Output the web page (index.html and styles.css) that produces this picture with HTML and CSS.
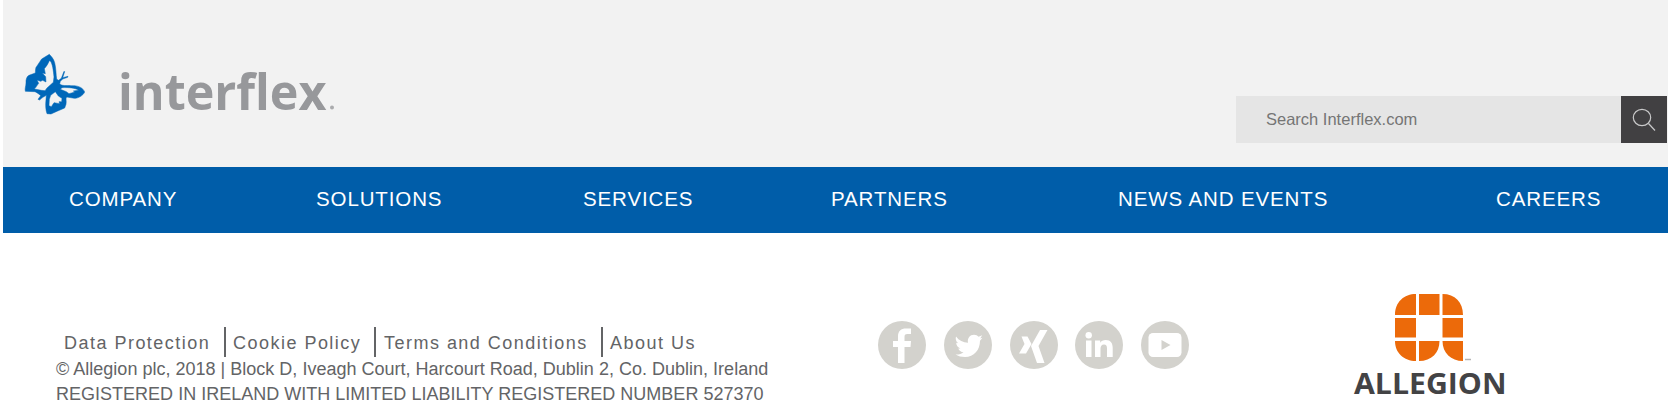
FILE: index.html
```html
<!DOCTYPE html>
<html lang="en">
<head>
<meta charset="utf-8">
<title>Interflex</title>
<link rel="stylesheet" href="styles.css">
</head>
<body>
<div class="page">
  <header class="header">
    <svg class="logo" viewBox="0 0 340 95" role="img" aria-label="interflex">
      <g transform="scale(.33333)">
        <path fill="#0067b9" stroke="#0067b9" stroke-width="1.5" fill-rule="evenodd" d="M103 28 C109 34 116 42 119 53 C123 68 123 88 125 103 L131 106 L139 100 L147 79 L149 80 L143 98 L159 94 L158 97 L143 102 L136 109 L134 117 C142 124 154 121 168 122 C190 121 204 128 209 141 C204 152 190 160 178 160 L155 156 C151 160 155 168 153 178 L149 189 L128 198 L108 207 L96 206 C92 195 91 180 93 164 L94 151 C88 154 79 160 74 165 L69 163 L77 152 C73 148 68 144 60 140 L31 139 C29 130 33 123 33 114 C32 103 36 94 42 91 L61 84 C62 77 60 69 66 63 L80 42 Z
        M103 47 C99 57 94 64 88 71 L91 86 L82 84 L92 95 L93 111 L83 106 L77 109 L66 105 L71 115 C66 121 63 128 58 132 L79 136 L90 137 L96 129 L115 112 L117 96 C115 77 113 57 106 48 Z
        M141 128 L136 133 L154 140 L162 146 L180 141 L175 138 L191 136 C182 129 163 127 141 128 Z
        M121 140 L107 151 L103 163 L102 182 L109 185 L117 173 L134 176 L132 170 L140 170 L141 160 L130 153 Z"/>
      </g>
      <text class="logo-word" x="103" y="65" textLength="208.500" lengthAdjust="spacingAndGlyphs">interflex</text>
      <circle cx="317" cy="62.500" r="2" fill="#aaabad"/>
    </svg>
    <form class="search">
      <input class="search-input" type="text" placeholder="Search Interflex.com" aria-label="Search">
      <button class="search-button" type="button" aria-label="Search">
        <svg width="24" height="24" viewBox="0 0 24 24" fill="none" stroke="#c9c9ca" stroke-width="1.2"><ellipse cx="10" cy="9.500" rx="8.700" ry="8.200"/><path d="M16.500 15.500l6.500 7"/></svg>
      </button>
    </form>
  </header>
  <nav class="nav">
    <a class="nav-link company">COMPANY</a>
    <a class="nav-link solutions">SOLUTIONS</a>
    <a class="nav-link services">SERVICES</a>
    <a class="nav-link partners">PARTNERS</a>
    <a class="nav-link news">NEWS AND EVENTS</a>
    <a class="nav-link careers">CAREERS</a>
  </nav>
  <footer class="footer">
    <div class="legal">
      <div class="links">
        <a class="link data">Data Protection</a>
        <a class="link cookie">Cookie Policy</a>
        <a class="link terms">Terms and Conditions</a>
        <a class="link about">About Us</a>
      </div>
      <p class="line address">© Allegion plc, 2018 | Block D, Iveagh Court, Harcourt Road, Dublin 2, Co. Dublin, Ireland</p>
      <p class="line registered">REGISTERED IN IRELAND WITH LIMITED LIABILITY REGISTERED NUMBER 527370</p>
    </div>
    <div class="social">
      <svg class="icon" viewBox="0 0 48 48"><circle cx="24" cy="24" r="24"/><path class="mark" d="M20 42V26h-5v-6h5v-4.500C20 10 23 7.500 28 7.500h5V13h-3.500c-2.500 0-3 1-3 3v4H33l-.5 6h-6v16z"/></svg>
      <svg class="icon" viewBox="0 0 48 48"><circle cx="24" cy="24" r="24"/><path class="mark" d="M12 15.500c3 4 7 6 12 6.200-.8-4.500 2-8 6-8 2 0 3.500.8 4.600 2l3.600-1.400-2 3.100 2.300-.6-2.500 3C36 29 30 36 21 36c-3.500 0-6.800-.8-9.500-2.500 3 .2 6-.6 8-2.300-2.500-.2-4.500-1.700-5.200-3.800h2.200c-2.700-.9-4.300-3-4.300-5.600l2 .5c-2.400-2-2.900-4.700-2.200-6.800z"/></svg>
      <svg class="icon" viewBox="0 0 48 48"><circle cx="24" cy="24" r="24"/><path class="mark" d="M11.500 15.500h6l4 7.500-5.500 9.500H9L14.500 23zM30 9h7.500L28.500 25l6 17h-7.500L21 25z"/></svg>
      <svg class="icon" viewBox="0 0 48 48"><circle cx="24" cy="24" r="24"/><circle class="mark" cx="13.700" cy="14.200" r="3.200"/><path class="mark" d="M11 19.500h5.500V36H11zM20 19.500h5.200v2.200c1-1.800 3-2.700 5.500-2.700 5 0 7 3 7 8v9H32v-8.500c0-2.500-.8-4-3-4-2.400 0-3.500 1.700-3.500 4V36H20z"/></svg>
      <svg class="icon" viewBox="0 0 48 48"><circle cx="24" cy="24" r="24"/><rect class="mark" x="7.500" y="12" width="33" height="24" rx="4.500"/><path d="M20.500 19v10l9-5z"/></svg>
    </div>
    <svg class="allegion" viewBox="0 0 160 115" role="img" aria-label="Allegion">
      <g fill="#ec6a0a">
        <path d="M66 4v21H45C45 12 54 4 66 4zM69 4h20.500v21H69zM92.500 4C105 4 113 12 113 25H92.500zM45 28h21v19.500H45zM92.500 28H113v19.500H92.500zM45 51h21v20C54 71 45 63 45 51zM69 51h20.500c0 12-8 20-20.500 20zM92.500 51H113v20c-12 0-20.500-8-20.500-20z"/>
      </g>
      <path d="M115 69.500h6" stroke="#b5b5b5" stroke-width="1.500"/>
      <text class="allegion-word" x="4" y="103.500" textLength="152.500" lengthAdjust="spacingAndGlyphs">ALLEGION</text>
    </svg>
  </footer>
</div>
</body>
</html>
```
FILE: styles.css
```css
* { box-sizing: border-box; }
body {
  margin: 0;
  background: #fff;
  font-family: "Liberation Sans", Arial, sans-serif;
}
.page { width: 1665px; margin-left: 3px; }
.header {
  display: flex;
  justify-content: space-between;
  height: 167px;
  padding: 45px 1px 0 12px;
  background: #f2f2f2;
}
.logo { width: 340px; height: 95px; }
.logo-word { font: 700 51px "Open Sans", sans-serif; fill: #97989b; }
.search { display: flex; width: 431px; height: 47px; margin: 51px 0 0; }
.search-input {
  width: 385px;
  height: 47px;
  padding: 0 30px;
  border: 0;
  background: #e5e5e5;
  font: 16.500px "Liberation Sans", Arial, sans-serif;
}
.search-input::placeholder { color: #757575; opacity: 1; }
.search-button {
  display: flex;
  align-items: center;
  justify-content: center;
  width: 46px;
  height: 47px;
  padding: 0;
  border: 0;
  background: #414042;
}
.nav {
  display: flex;
  height: 66px;
  padding-left: 66px;
  background: #005da9;
}
.nav-link {
  flex: none;
  color: #fff;
  font-size: 20.500px;
  letter-spacing: 0.880px;
  line-height: 64px;
  white-space: nowrap;
}
.company { width: 247px; }
.solutions { width: 267px; }
.services { width: 248px; }
.partners { width: 287px; }
.news { width: 378px; }
.footer { display: flex; height: 173px; color: #636466; }
.legal { width: 875px; padding: 94px 0 0 53px; }
.links { display: flex; height: 30px; }
.link {
  flex: none;
  font-size: 18px;
  letter-spacing: 1.480px;
  line-height: 32px;
  white-space: nowrap;
}
.link + .link { border-left: 2px solid #636466; }
.data { width: 168px; padding-left: 8px; }
.cookie { width: 150px; padding-left: 7px; }
.terms { width: 227px; padding-left: 8px; }
.about { padding-left: 7px; }
.line { margin: 0; font-size: 18px; line-height: 25px; letter-spacing: 0.010px; white-space: nowrap; }
.social { display: flex; gap: 17.750px; width: 472px; padding-top: 88px; }
.icon { flex: none; width: 48px; height: 48px; fill: #d3d2cd; }
.mark { fill: #fff; }
.allegion { width: 160px; height: 115px; margin-top: 57px; }
.allegion-word { font: 700 29px "Open Sans", sans-serif; fill: #434345; }
```
